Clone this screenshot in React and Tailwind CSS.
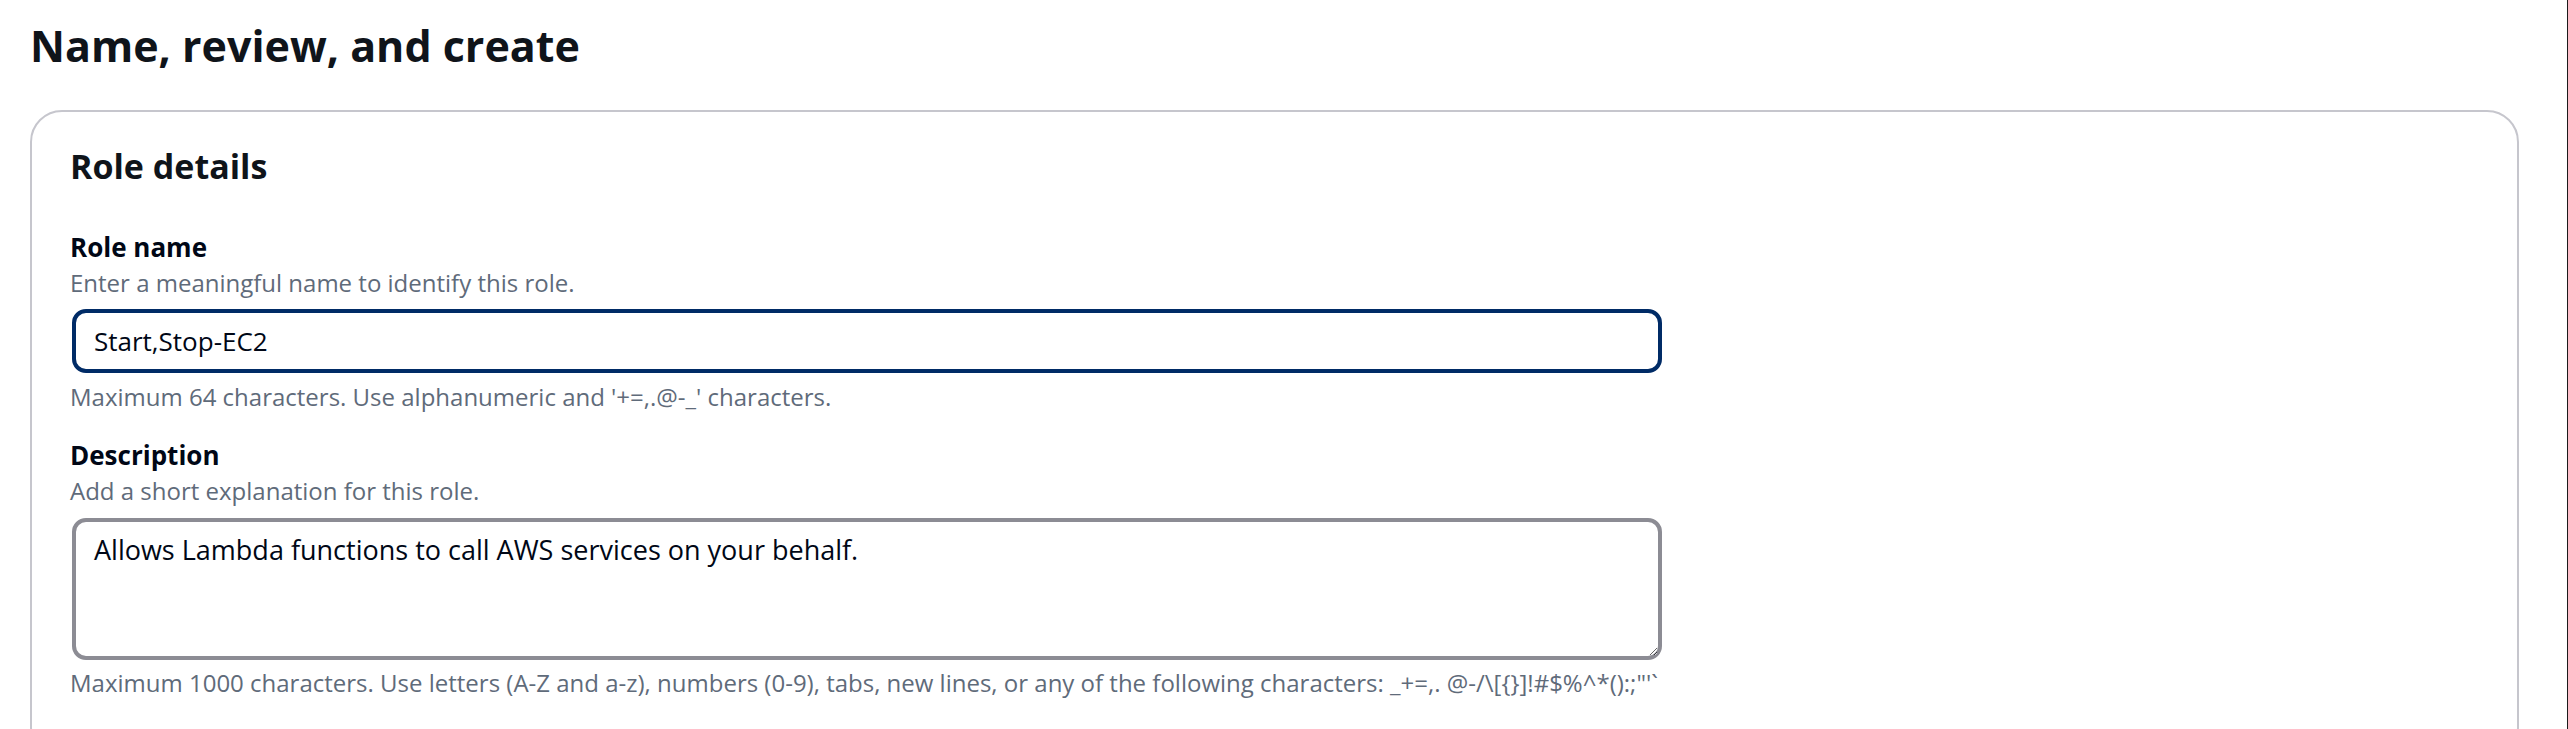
import React from 'react';

const FONT = { fontFamily: '"Open Sans", "Noto Sans", Arial, sans-serif' };

function Field({ label, hint, constraint, children, className = '' }) {
  return (
    <div className={className}>
      <div className="text-[26px] leading-[32px] font-bold text-[#000716]">{label}</div>
      <div className="mt-[5px] text-[24px] leading-[30px] text-[#5f6b7a]">{hint}</div>
      {children}
      <div className="text-[24px] leading-[30px] text-[#5f6b7a]">{constraint}</div>
    </div>
  );
}

export default function App() {
  return (
    <div className="w-full min-h-screen bg-white border-r border-[#1b1b1b] pl-[30px] pr-[48px] overflow-hidden" style={FONT}>
      <h1 className="pt-[24px] text-[43px] leading-[44px] font-bold text-[#0f141a]">
        Name, review, and create
      </h1>

      <div className="mt-[42px] border-2 border-[#c6c6cd] rounded-[32px] pl-[38px] pt-[34px] pb-[60px]">
        <h2 className="text-[34px] leading-[40px] font-bold text-[#0f141a]">Role details</h2>

        <Field
          className="mt-[45px]"
          label="Role name"
          hint="Enter a meaningful name to identify this role."
          constraint="Maximum 64 characters. Use alphanumeric and '+=,.@-_' characters."
        >
          <input
            readOnly
            defaultValue="Start,Stop-EC2"
            className="mt-[11px] mb-[9px] ml-[2px] block w-[1590px] h-[64px] border-4 border-[#002b66] rounded-[14px] px-[18px] text-[26px] text-[#000716] outline-none bg-white"
            style={FONT}
          />
        </Field>

        <Field
          className="mt-[27px]"
          label="Description"
          hint="Add a short explanation for this role."
          constraint={"Maximum 1000 characters. Use letters (A-Z and a-z), numbers (0-9), tabs, new lines, or any of the following characters: _+=,. @-/\\[{}]!#$%^*():;\"'`"}
        >
          <textarea
            readOnly
            defaultValue="Allows Lambda functions to call AWS services on your behalf."
            className="mt-[12px] mb-[8px] ml-[2px] block w-[1590px] h-[142px] border-4 border-[#8c8c94] rounded-[14px] px-[18px] pt-[13px] text-[27px] leading-[30px] text-[#000716] outline-none bg-white resize-y"
            style={FONT}
          />
        </Field>
      </div>
    </div>
  );
}
